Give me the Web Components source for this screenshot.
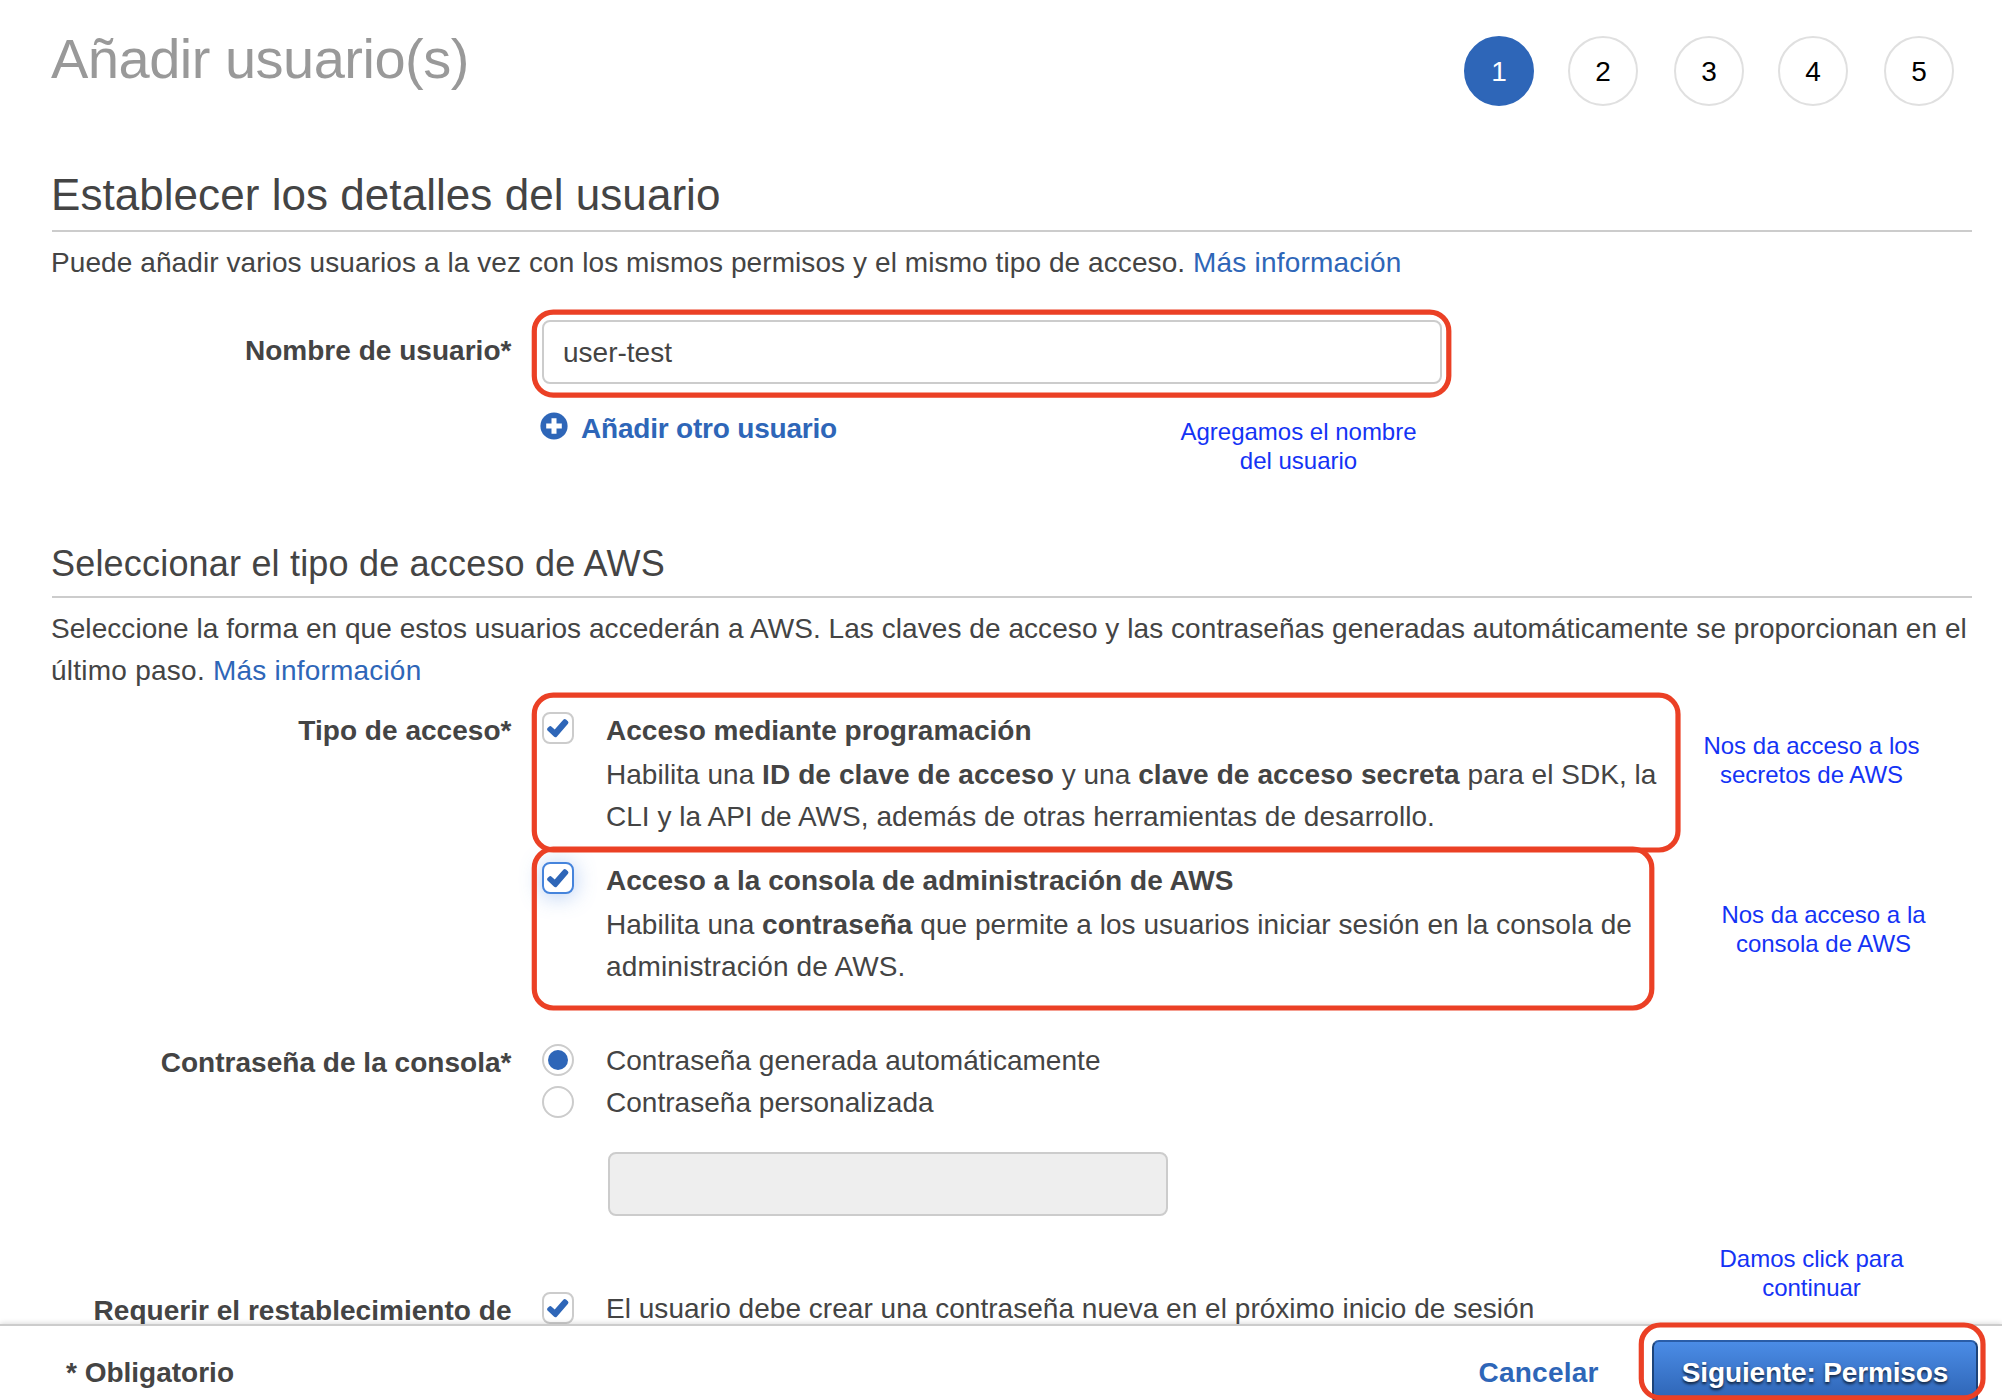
<!DOCTYPE html>
<html lang="es">
<head>
<meta charset="utf-8">
<title>Añadir usuario(s)</title>
<style>
html,body{margin:0;background:#fff}
body{width:2002px;height:1400px;overflow:hidden;font:28px/42px "Liberation Sans",Arial,sans-serif;color:#444}
</style>
</head>
<body>
<add-user-page></add-user-page>
<script>
const define = (name, html, setup) => customElements.define(name, class extends HTMLElement {
  connectedCallback() {
    if (this.shadowRoot) return;
    const t = document.createElement('template');
    t.innerHTML = html;
    const root = this.attachShadow({mode: 'open'});
    root.append(t.content.cloneNode(true));
    if (setup) setup(this, root);
  }
});

define('step-dot', `
<style>
:host{display:flex;box-sizing:border-box;width:70px;height:70px;border:2px solid #e0e0e0;border-radius:50%;align-items:center;justify-content:center;color:#000;font-size:28px;line-height:42px;padding-top:2px;background:#fff}
:host([active]){background:#2e66b8;border-color:#2e66b8;color:#fff}
</style><span><slot></slot></span>`);

define('wizard-header', `
<style>
:host{display:flex;justify-content:space-between;height:170px;box-sizing:border-box;padding:27px 48px 0 51px}
h1{margin:0;font-weight:400;font-size:56px;line-height:64px;letter-spacing:-.5px;color:#999}
nav{display:flex;gap:34px;padding-top:9px}
step-dot:nth-child(odd):not(:first-child){margin-left:2px}
</style>
<h1><slot></slot></h1>
<nav><step-dot active>1</step-dot><step-dot>2</step-dot><step-dot>3</step-dot><step-dot>4</step-dot><step-dot>5</step-dot></nav>`);

define('form-section', `
<style>
:host{display:block}
.head{margin:0 30px 10px 52px;border-bottom:2px solid #ccc}
h2,h3{margin:0 0 0 -1px;font-weight:400}
h2{font-size:44px;line-height:50px;padding-bottom:10px;letter-spacing:.05px}
h3{font-size:36px;line-height:42px;padding:1px 0 11px;letter-spacing:.19px}
p{margin:0 20px 0 51px;letter-spacing:var(--intro-spacing,.06px)}
</style>
<div class="head"></div>
<p><slot name="intro"></slot></p>
<slot></slot>`, (el, root) => {
  const h = document.createElement(el.getAttribute('level') || 'h2');
  h.textContent = el.getAttribute('heading');
  root.querySelector('.head').append(h);
});

define('text-link', `<style>:host{color:#2e66b8;letter-spacing:.2px}:host([strong]){font-weight:700}</style><slot></slot>`);

define('form-row', `
<style>
:host{display:flex;gap:30.5px}
.label{flex:none;width:511.5px;text-align:right;font-weight:700;padding-top:var(--label-shift,0px);white-space:nowrap;letter-spacing:.03px}
.field{flex:1;display:flex;flex-direction:column;align-items:flex-start}
</style>
<div class="label"></div><div class="field"><slot></slot></div>`, (el, root) => {
  root.querySelector('.label').textContent = el.getAttribute('label');
});

define('text-field', `
<style>
:host{display:flex;box-sizing:border-box;height:64px;width:var(--w,900px);border:2px solid #ccc;border-radius:8px;background:#fff;padding:2px 0 0 19px;align-items:center}
:host([disabled]){background:#eee}
</style><slot></slot>`);

define('add-link', `
<style>
:host{display:flex;align-items:center;gap:13px;color:#2e66b8;font-weight:700;letter-spacing:-.2px;margin:24px 0 0 -2px}
svg{display:block;margin-top:-6px}
</style>
<svg width="28" height="28" viewBox="0 0 28 28"><circle cx="14" cy="14" r="13.6" fill="#2e66b8"/><path d="M14 6.2v15.6M6.2 14h15.6" stroke="#fff" stroke-width="5"/></svg>
<span><slot></slot></span>`);

define('check-box', `
<style>
:host{display:block;box-sizing:border-box;flex:none;width:32px;height:32px;border:2px solid #ccc;border-radius:8px;background:#fff}
:host([focused]){border-color:#4584dc;box-shadow:0 2px 22px rgba(70,130,225,.42)}
svg{display:block;margin:-2px}
</style>
<svg width="32" height="32" viewBox="0 0 32 32"><path d="M5.3 18.2Q4.6 16.9 5.6 15.9L7.2 14.6Q8.4 13.6 9.6 14.7L12.7 17.6L21.3 7.8Q22.6 6.4 24 7.6L25.9 9.3Q27 10.4 26 11.7L15 24.4Q13.5 26 11.9 24.6Z" fill="#2e66b8"/></svg>`);

define('radio-button', `
<style>
:host{display:flex;box-sizing:border-box;flex:none;width:32px;height:32px;border:2px solid #ccc;border-radius:50%;background:#fff;align-items:center;justify-content:center}
:host([checked])::before{content:"";width:20px;height:20px;border-radius:50%;background:#2e66b8}
</style>`);

define('choice-option', `
<style>
:host{display:flex;gap:32px;align-items:flex-start}
.control{padding-top:var(--control-shift,2px)}
.title{font-weight:700;padding-bottom:2px;letter-spacing:.03px}
.body{white-space:nowrap;letter-spacing:.03px}
::slotted(b){letter-spacing:.11px}
</style>
<div class="control"><slot name="control"></slot></div>
<div><div class="title"><slot name="title"></slot></div><div class="body"><slot></slot></div></div>`, (el, root) => {
  if (!el.querySelector('[slot=title]')) root.querySelector('.title').remove();
});

define('primary-button', `
<style>
:host{display:flex;box-sizing:border-box;width:326px;height:64px;border:2px solid #1c4379;border-top-color:#2a5da8;border-radius:7px;background:linear-gradient(#4b8ce6,#2d63b3);color:#fff;font-weight:700;letter-spacing:-.15px;justify-content:center;padding-top:10px;text-shadow:0 2px 3px rgba(0,0,0,.75)}
</style><slot></slot>`);

define('wizard-footer', `
<style>
:host{display:flex;box-sizing:border-box;position:absolute;left:0;right:0;bottom:0;height:76px;border-top:2px solid #ccc;background:#fff;box-shadow:0 -1px 5px rgba(0,0,0,.14);padding:14px 24px 0 66px;align-items:flex-start}
.req{flex:1;font-weight:700;padding-top:12px}
.cancel{padding-top:12px;margin-right:53.5px}
</style>
<div class="req">* Obligatorio</div>
<text-link strong class="cancel">Cancelar</text-link>
<primary-button>Siguiente: Permisos</primary-button>`);

/* Free-floating note centred on x, with its first line at y. */
define('callout-note', `
<style>:host{display:block;position:absolute;width:300px;text-align:center;font-size:24px;line-height:29px;color:#1433f5}</style><slot></slot>`, el => {
  el.style.left = el.getAttribute('x') - 150 + 'px';
  el.style.top = el.getAttribute('y') + 'px';
});

define('callout-layer', `
<style>
:host{display:block;position:absolute;inset:0}
svg{display:block}
</style>
<svg width="2002" height="1400" fill="none" stroke="#eb4025" stroke-width="5.2">
<rect x="534.3" y="312.1" width="914.5" height="83" rx="19"/>
<rect x="534.3" y="695.2" width="1143.7" height="154.8" rx="19"/>
<rect x="534.3" y="849" width="1117.5" height="159" rx="19"/>
<rect x="1641.3" y="1325" width="341.7" height="72.8" rx="19"/>
</svg>
<callout-note x="1298.5" y="417">Agregamos el nombre<br>del usuario</callout-note>
<callout-note x="1811.5" y="731">Nos da acceso a los<br>secretos de AWS</callout-note>
<callout-note x="1823.5" y="900">Nos da acceso a la<br>consola de AWS</callout-note>
<callout-note x="1811.5" y="1244">Damos click para<br>continuar</callout-note>`);

define('add-user-page', `
<style>
:host{display:block;position:relative;width:2002px;height:1400px;overflow:hidden;background:#fff}
.user-section{--intro-spacing:.085px}
.name{margin-top:36px;--label-shift:10px}
.access-section{margin-top:92px}
.access{margin-top:18px}
.second{margin-top:22px}
.password{margin-top:52px;--label-shift:2px;--control-shift:4px}
.custom{--w:560px;margin:28px 0 0 66px}
.reset{margin-top:72px;--label-shift:2px;--control-shift:4px}
.loose{letter-spacing:.15px}
.looser{letter-spacing:.25px}
</style>
<wizard-header>Añadir usuario(s)</wizard-header>
<form-section class="user-section" level="h2" heading="Establecer los detalles del usuario">
  <span slot="intro">Puede añadir varios usuarios a la vez con los mismos permisos y el mismo tipo de acceso. <text-link>Más información</text-link></span>
  <form-row class="name" label="Nombre de usuario*">
    <text-field>user-test</text-field>
    <add-link>Añadir otro usuario</add-link>
  </form-row>
</form-section>
<form-section class="access-section" level="h3" heading="Seleccionar el tipo de acceso de AWS">
  <span slot="intro">Seleccione la forma en que estos usuarios accederán a AWS. Las claves de acceso y las contraseñas generadas automáticamente se proporcionan en el<br><span class="looser">último paso. <text-link>Más información</text-link></span></span>
  <form-row class="access" label="Tipo de acceso*">
    <choice-option><check-box slot="control"></check-box><span slot="title">Acceso mediante programación</span>Habilita una <b>ID de clave de acceso</b> y una <b>clave de acceso secreta</b> para el SDK, la<br>CLI y la API de AWS, además de otras herramientas de desarrollo.</choice-option>
    <choice-option class="second"><check-box slot="control" focused></check-box><span slot="title">Acceso a la consola de administración de AWS</span>Habilita una <b>contraseña</b> que permite a los usuarios iniciar sesión en la consola de<br><span class="loose">administración de AWS.</span></choice-option>
  </form-row>
  <form-row class="password" label="Contraseña de la consola*">
    <choice-option><radio-button slot="control" checked></radio-button>Contraseña generada automáticamente</choice-option>
    <choice-option><radio-button slot="control"></radio-button>Contraseña personalizada</choice-option>
    <text-field class="custom" disabled></text-field>
  </form-row>
  <form-row class="reset" label="Requerir el restablecimiento de">
    <choice-option><check-box slot="control"></check-box>El usuario debe crear una contraseña nueva en el próximo inicio de sesión</choice-option>
  </form-row>
</form-section>
<wizard-footer></wizard-footer>
<callout-layer></callout-layer>`);
</script>
</body>
</html>
